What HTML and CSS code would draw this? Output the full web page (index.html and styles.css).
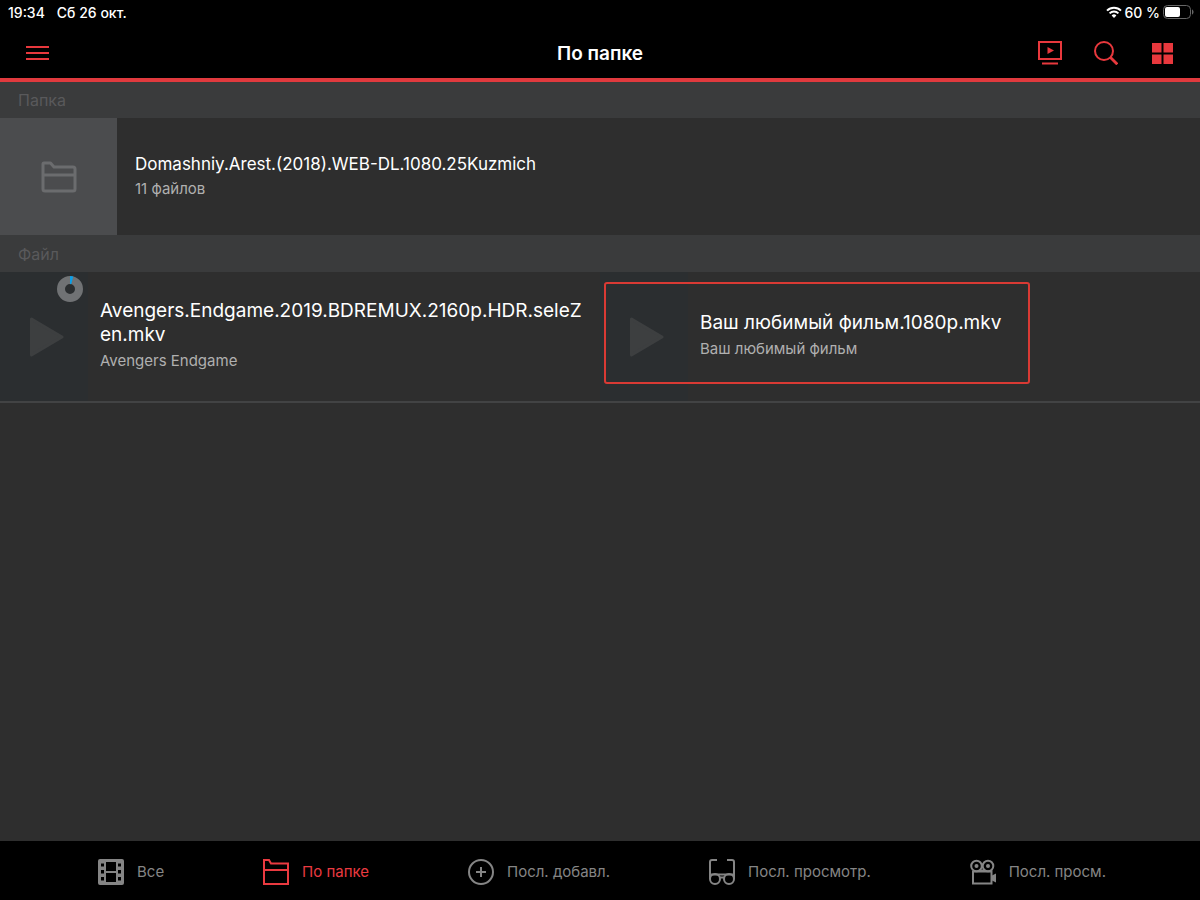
FILE: index.html
```html
<!DOCTYPE html>
<html lang="ru">
<head>
<meta charset="utf-8">
<meta name="viewport" content="width=device-width, initial-scale=1">
<title>По папке</title>
<link rel="stylesheet" href="styles.css">
</head>
<body>
<div class="app">
  <header class="top">
    <div class="status">
      <time>19:34</time>
      <span>Сб 26 окт.</span>
      <div class="status-right">
        <svg class="wifi" viewBox="0 0 16 12" aria-hidden="true"><g fill="none" stroke="#fff" stroke-width="2"><path d="M1 4.600a10 10 0 0 1 14 0"/><path d="M3.600 7.400a6.300 6.300 0 0 1 8.800 0"/></g><path d="M5.600 9.400a3.400 3.400 0 0 1 4.800 0L8 12z" fill="#fff"/></svg>
        <span>60 %</span>
        <svg class="battery" viewBox="0 0 31 14" aria-hidden="true"><rect x=".5" y=".5" width="27" height="13" rx="4" fill="none" stroke="#666"/><rect x="2" y="2" width="15" height="10" rx="2" fill="#fff"/><path d="M29 4.500c2 .5 2 4.500 0 5z" fill="#666"/></svg>
      </div>
    </div>
    <div class="nav">
      <button class="icon-button" type="button" aria-label="Меню"><svg width="24" height="24" viewBox="0 0 24 24" fill="none" stroke="currentColor" stroke-width="2"><path d="M0 6h23M0 12h23M0 18h23"/></svg></button>
      <h1>По папке</h1>
      <div class="actions">
        <button class="icon-button" type="button" aria-label="Трансляция"><svg width="24" height="24" viewBox="0 0 24 24"><path d="M1 1h22v17H1zM4 22.500h16" fill="none" stroke="currentColor" stroke-width="2"/><path d="M9.500 6v7l6.500-3.500z" fill="currentColor"/></svg></button>
        <button class="icon-button" type="button" aria-label="Поиск"><svg width="24" height="24" viewBox="0 0 24 24" fill="none" stroke="currentColor"><circle cx="10" cy="10" r="9" stroke-width="2"/><path d="M16 16l7.300 7.300" stroke-width="2.800"/></svg></button>
        <button class="icon-button" type="button" aria-label="Сетка"><svg width="24" height="24" viewBox="0 0 24 24" fill="currentColor"><path d="M2 2h9.500v9.500H2zM13.500 2H23v9.500h-9.500zM2 13.500h9.500V23H2zM13.500 13.500H23V23h-9.500z"/></svg></button>
      </div>
    </div>
  </header>

  <main class="content">
    <h2 class="section">Папка</h2>
    <a class="folder" href="#folder">
      <span class="folder-thumb"><svg width="36" height="32" viewBox="0 0 36 32" fill="none" stroke="currentColor" stroke-width="3" stroke-linejoin="round"><path d="M2 3a1 1 0 0 1 1-1h6.500l3.500 4h19a2 2 0 0 1 2 2v20a2 2 0 0 1-2 2H4a2 2 0 0 1-2-2zM2 14h32"/></svg></span>
      <span class="info">
        <span class="folder-title">Domashniy.Arest.(2018).WEB-DL.1080.25Kuzmich</span>
        <span class="sub">11 файлов</span>
      </span>
    </a>
    <h2 class="section">Файл</h2>
    <div class="files">
      <a class="file" href="#avengers">
        <span class="thumb">
          <svg width="34" height="40" viewBox="0 0 34 40"><path d="M1.500 2v36L32 20z" fill="currentColor" stroke="currentColor" stroke-width="3" stroke-linejoin="round"/></svg>
          <svg class="progress" width="26" height="26" viewBox="0 0 26 26"><circle cx="13" cy="13" r="9" fill="none" stroke="#707274" stroke-width="8"/><path d="M13 0a13 13 0 0 1 3.300.4L14.200 8.200a5 5 0 0 0-1.200-.2z" fill="#0b9fe8"/></svg>
        </span>
        <span class="info">
          <span class="file-title">Avengers.Endgame.2019.BDREMUX.2160p.HDR.seleZen.mkv</span>
          <span class="sub">Avengers Endgame</span>
        </span>
      </a>
      <a class="file selected" href="#film">
        <span class="thumb">
          <svg width="34" height="40" viewBox="0 0 34 40"><path d="M1.500 2v36L32 20z" fill="currentColor" stroke="currentColor" stroke-width="3" stroke-linejoin="round"/></svg>
        </span>
        <span class="info">
          <span class="file-title">Ваш любимый фильм.1080p.mkv</span>
          <span class="sub">Ваш любимый фильм</span>
        </span>
      </a>
    </div>
  </main>

  <nav class="tabs" aria-label="Разделы">
    <a class="tab" href="#all"><svg width="26" height="26" viewBox="0 0 26 26"><path fill="currentColor" fill-rule="evenodd" d="M2 0h22a2 2 0 0 1 2 2v22a2 2 0 0 1-2 2H2a2 2 0 0 1-2-2V2a2 2 0 0 1 2-2zM8 3v9h10V3zM8 14v9h10v-9zM3 4.500v3h3v-3zM3 11v3.500h3V11zM3 18v3.500h3V18zM20 4.500v3h3v-3zM20 11v3.500h3V11zM20 18v3.500h3V18z"/></svg>Все</a>
    <a class="tab active" href="#folders" aria-current="page"><svg width="26" height="26" viewBox="0 0 26 26" fill="none" stroke="currentColor" stroke-width="2"><path d="M1 1h5l2 3.500h17V25H1zM1 11h24"/></svg>По папке</a>
    <a class="tab" href="#added"><svg width="26" height="26" viewBox="0 0 26 26" fill="none" stroke="currentColor" stroke-width="2"><circle cx="13" cy="13" r="12"/><path d="M13 8v10M8 13h10"/></svg>Посл. добавл.</a>
    <a class="tab" href="#viewed"><svg width="26" height="26" viewBox="0 0 26 26" fill="none" stroke="currentColor" stroke-width="2"><path d="M8 1H3a2 2 0 0 0-2 2v17M18 1h5a2 2 0 0 1 2 2v17M1 15.500h24M11 18.500h4"/><circle cx="6" cy="20" r="5"/><circle cx="20" cy="20" r="5"/></svg>Посл. просмотр.</a>
    <a class="tab" href="#watched"><svg width="26" height="26" viewBox="0 0 26 26" fill="none" stroke="currentColor" stroke-width="2"><circle cx="6.500" cy="7" r="5.300"/><circle cx="18" cy="7" r="5.300"/><path d="M3 12v12.500h18.500V12.500H3M10 11.500h5"/><g fill="currentColor" stroke="none"><circle cx="6.500" cy="7" r="2"/><circle cx="18" cy="7" r="2"/><path d="M22 16.500l4-2v9l-4-2z"/></g></svg>Посл. просм.</a>
  </nav>
</div>
</body>
</html>
```
FILE: styles.css
```css
*,
*::after {
  box-sizing: border-box;
}

body {
  margin: 0;
  background: #2e2e2e;
  color: #fff;
  font-family: Inter, "Noto Sans", sans-serif;
}

a {
  color: inherit;
  text-decoration: none;
}

svg {
  display: block;
  flex: none;
}

.app {
  display: flex;
  flex-direction: column;
  min-height: 100vh;
}

.top {
  background: #000;
  border-bottom: 4px solid #e03a3e;
}

.status {
  display: flex;
  align-items: center;
  gap: 12px;
  height: 24px;
  padding: 0 6px 0 8px;
  font-size: 14px;
  font-weight: 500;
}

.status-right {
  display: flex;
  align-items: center;
  gap: 3px;
  margin-left: auto;
}

.wifi {
  width: 16px;
  height: 12px;
}

.battery {
  width: 31px;
  height: 14px;
}

.nav {
  display: grid;
  grid-template-columns: 1fr auto 1fr;
  align-items: center;
  height: 54px;
  padding: 0 26px;
}

h1 {
  margin: 0;
  padding-top: 6px;
  font-size: 19px;
  font-weight: 600;
  line-height: 24px;
}

.icon-button {
  justify-self: start;
  padding: 4px 0 0;
  border: 0;
  background: none;
  color: #e8383d;
}

.actions {
  display: flex;
  justify-content: flex-end;
  gap: 32px;
}

.content {
  flex: 1;
}

.section {
  display: flex;
  align-items: center;
  height: 36px;
  margin: 0;
  padding: 0 18px;
  background: #3a3b3c;
  color: #59595b;
  font-size: 16px;
  font-weight: 400;
}

.folder {
  display: flex;
  align-items: center;
  border-bottom: 1px solid #3a3b3c;
}

.folder-thumb {
  display: grid;
  place-items: center;
  width: 117px;
  height: 117px;
  background: #4b4c4e;
  color: #6b6c6e;
}

.info {
  display: flex;
  flex: 1;
  flex-direction: column;
  gap: 4px;
  min-width: 0;
}

.folder .info {
  padding: 0 18px 2px;
}

.folder-title {
  font-size: 17px;
  line-height: 22px;
}

.sub {
  color: #b0b0b0;
  font-size: 15px;
  line-height: 20px;
}

.files {
  display: grid;
  grid-template-columns: 1fr 1fr;
  border-bottom: 2px solid #424344;
}

.file {
  position: relative;
  display: flex;
  align-items: center;
}

.thumb {
  position: relative;
  display: flex;
  align-items: center;
  justify-content: flex-end;
  width: 88px;
  height: 129px;
  padding-right: 24px;
  background: #2b2e30;
  color: #3d3f40;
}

.progress {
  position: absolute;
  top: 4px;
  right: 5px;
}

.file .info {
  padding: 0 12px 4px;
}

.file-title {
  font-size: 19px;
  line-height: 24px;
  overflow-wrap: anywhere;
}

.selected::after {
  content: "";
  position: absolute;
  top: 10px;
  left: 4px;
  width: 426px;
  height: 102px;
  border: 2px solid #d93a34;
  border-radius: 3px;
}

.tabs {
  display: flex;
  align-items: center;
  justify-content: space-between;
  height: 59px;
  padding: 2px 94px 0 98px;
  background: #000;
  color: #858585;
  font-size: 15px;
}

.tab {
  display: flex;
  align-items: center;
  gap: 13px;
}

.active {
  color: #ea3a40;
}
```
